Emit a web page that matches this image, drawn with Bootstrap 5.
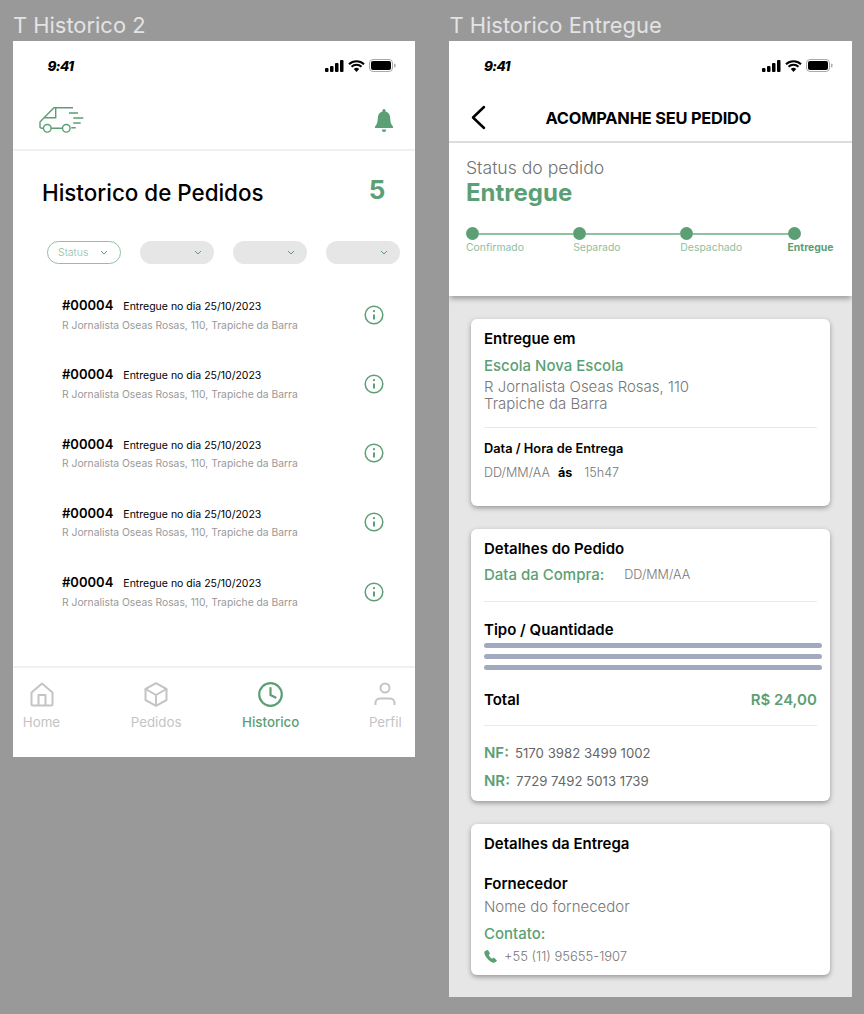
<!DOCTYPE html>
<html lang="pt-BR">
<head>
  <meta charset="UTF-8" />
  <meta name="viewport" content="width=device-width, initial-scale=1.0"/>
  <title>Historico</title>
  <link href="https://cdn.jsdelivr.net/npm/bootstrap@5.3.0/dist/css/bootstrap.min.css" rel="stylesheet"/>
  <style>
    :root { --verde: #5c9f74; --verde-claro: #8fc0a0; --cinza: #7d7d7d; }
    body { background: #999; font-family: Inter, "Liberation Sans", sans-serif; color: #000; height: 1014px; overflow: hidden; }
    .canvas { padding-left: 12.5px; gap: 33.7px; }
    .frame-col { width: 402.8px; }
    .frame-label { height: 41px; padding: 13px 0 0 .5px; font-size: 21.900px; line-height: 24px; color: #e3e3e3; white-space: nowrap; }
    .frame { background: #fff; }
    .status-bar { height: 52px; padding: 17px 19px 0 35px; }
    .clock { font-size: 13.500px; font-weight: 800; font-style: italic; line-height: 17px; letter-spacing: -.6px; }
    .status-icons { gap: 4px; margin-top: 1px; }

    /* gaps between the text lines of the cards */
    .sp-3 { margin-top: 3px; } .sp-4 { margin-top: 4px; } .sp-5 { margin-top: 5px; } .sp-8 { margin-top: 8px; } .sp-9 { margin-top: 9px; }
    .sp-10 { margin-top: 10px; } .sp-13 { margin-top: 13px; } .sp-15 { margin-top: 15px; } .sp-16 { margin-top: 16px; } .sp-17 { margin-top: 17px; }
    .sp-18 { margin-top: 18px; } .sp-19 { margin-top: 19px; } .sp-21 { margin-top: 21px; } .sp-22 { margin-top: 22px; }

    /* left */
    .top-bar { height: 58px; padding: 0 22px 2px 26px; border-bottom: 2px solid #f0f0f0; }
    .title-row { padding: 25px 30px 0 29.500px; height: 90px; }
    .title-row h1 { font-size: 22.400px; font-weight: 500; line-height: 34px; margin: 0; }
    .count { font-size: 26px; font-weight: 700; color: var(--verde); line-height: 30px; margin-top: -1px; }
    .filters { padding-left: 34.500px; gap: 19px; }
    .pill { width: 74px; height: 23px; border-radius: 12px; background: #e6e6e6; padding-right: 12px; }
    .pill-on { background: #fff; border: 1px solid var(--verde-claro); color: var(--verde-claro); font-size: 10.500px; padding: 0 12px 0 10px; }
    .orders { padding: 32px 31px 0 49.500px; height: 402px; }
    .order { height: 69.3px; }
    .order-top { line-height: 17px; }
    .order-id { font-size: 13px; font-weight: 600; }
    .order-date { font-size: 10.500px; font-weight: 400; margin-left: 10px; }
    .order-addr { font-size: 10.300px; color: #999; line-height: 14px; margin-top: 2.500px; }
    .order-info { margin-top: 8.500px; }
    .tabbar { height: 91px; padding: 14px 1px 0 0; border-top: 2px solid #f0f0f0; }
    .tab { width: 58px; color: #c4c4c4; font-size: 13.300px; line-height: 16px; font-weight: 400; }
    .tab svg { margin-bottom: 7px; }
    .tab-on { color: var(--verde); font-weight: 500; }

    /* right */
    .back-bar { height: 50px; padding-left: 22.500px; border-bottom: 2px solid #ddd; }
    .back-title { font-size: 16.400px; font-weight: 700; letter-spacing: -.2px; margin-left: 59px; padding-top: 2px; }
    .status-box { height: 153px; padding: 13px 17px 0; box-shadow: 0 4px 5px -1px rgba(0,0,0,.3); }
    .status-small { font-size: 17.600px; line-height: 24px; color: #727272; font-weight: 300; }
    .status-big { font-size: 24px; line-height: 26px; font-weight: 700; color: var(--verde); }
    .stepper { margin-top: 21px; width: 369px; }
    .step { width: 107.2px; }
    .step-last { width: 47px; }
    .step-dot { width: 13px; height: 13px; border-radius: 50%; background: var(--verde); }
    .step-line { flex: 1; height: 2px; background: var(--verde-claro); }
    .step-name { font-size: 10.400px; line-height: 13px; color: var(--verde-claro); display: block; padding-top: 1px; }
    .step-end { font-weight: 700; color: var(--verde); white-space: nowrap; }
    .panel-area { background: #e6e6e6; padding: 23px 22px 22px; height: 701px; gap: 23px; }
    .info-card { border: 0; border-radius: 6px; padding: 11px 13px 0; box-shadow: 0 2px 5px rgba(0,0,0,.35); }
    .card-head { font-size: 15px; font-weight: 600; line-height: 18px; }
    .green-head { font-size: 15px; font-weight: 500; line-height: 18px; color: var(--verde); }
    .gray-big { font-size: 15px; font-weight: 300; line-height: 17px; color: #777; }
    .gray-small { font-size: 12.600px; font-weight: 300; line-height: 16px; color: #777; }
    .phone-line { font-size: 13px; gap: 7px; }
    .sub-head { font-size: 12.800px; font-weight: 600; line-height: 16px; }
    .rule { height: 1px; background: #e9e9e9; }
    .bar-stack { gap: 6px; margin-right: -5px; }
    .bar-line { height: 5px; border-radius: 3px; background: #a1aabf; }
    .nf-row { gap: 6px; }
    .nf-code { font-size: 13.200px; line-height: 18px; color: #666; font-weight: 400; }
    .end-25 { margin-bottom: 25px; }
    .end-11 { margin-bottom: 11px; }
  </style>
</head>
<body>
  <div class="canvas d-flex">

    <!-- Historico -->
    <div class="frame-col">
      <div class="frame-label">T Historico 2</div>
      <div class="frame">
        <div class="status-bar d-flex justify-content-between align-items-start">
          <span class="clock">9:41</span>
          <span class="status-icons d-flex align-items-center">
            <svg width="19" height="12" viewBox="0 0 19 12"><rect x="0" y="8" width="3.500" height="4" rx="1"/><rect x="5" y="6" width="3.500" height="6" rx="1"/><rect x="10" y="3" width="3.500" height="9" rx="1"/><rect x="15" y="0" width="3.500" height="12" rx="1"/></svg>
            <svg width="17" height="12" viewBox="0 0 17 12"><path d="M1 4.200a11 11 0 0 1 15 0M3.500 6.800a7.400 7.400 0 0 1 10 0" fill="none" stroke="#000" stroke-width="2"/><path d="M5.800 9a4 4 0 0 1 5.400 0L8.500 12z"/></svg>
            <svg width="27" height="13" viewBox="0 0 27 13"><rect x=".5" y=".5" width="23" height="12" rx="3.500" fill="none" stroke="#aaa"/><rect x="2" y="2" width="20" height="9" rx="2"/><rect x="25" y="4.500" width="1.500" height="4" rx=".7" fill="#aaa"/></svg>
          </span>
        </div>
        <div class="top-bar d-flex justify-content-between align-items-center">
          <svg width="45" height="26" viewBox="0 0 45 26" fill="none" stroke="#5c9f74" stroke-width="1.400">
            <path d="M34 .7H15L5 10.700 1 15v5q0 1.300 3.500 1.300M12 21.300h11.500M16.700 .7v10H5"/>
            <circle cx="8.300" cy="21.300" r="3.800"/><circle cx="27.300" cy="21.300" r="3.800"/>
            <path d="M30 6h9M34.300 11h10M34.300 16h7.400M32.300 20.700h4.400"/>
          </svg>
          <svg width="18" height="23" viewBox="0 0 20 23" preserveAspectRatio="none" fill="#5c9f74"><path d="M10 0a1.800 1.800 0 0 1 1.800 1.800v.7c3.500.8 5.200 3.700 5.200 7.500 0 3.500 1 5.500 3 7.500v1.500H0V17.500c2-2 3-4 3-7.500 0-3.800 1.700-6.700 5.200-7.500v-.7A1.800 1.800 0 0 1 10 0z"/><path d="M7.500 20.500h5a2.500 2.500 0 0 1-5 0z"/></svg>
        </div>
        <div class="title-row d-flex justify-content-between align-items-start">
          <h1>Historico de Pedidos</h1>
          <span class="count">5</span>
        </div>
        <div class="filters d-flex">
          <div class="pill pill-on d-flex justify-content-between align-items-center"><span class="fw-light">Status</span><svg width="8" height="5" viewBox="0 0 8 5" fill="none" stroke="#5c9f74"><path d="M1 1l3 3 3-3"/></svg></div>
          <div class="pill d-flex justify-content-end align-items-center"><svg width="8" height="5" viewBox="0 0 8 5" fill="none" stroke="#5c9f74"><path d="M1 1l3 3 3-3"/></svg></div>
          <div class="pill d-flex justify-content-end align-items-center"><svg width="8" height="5" viewBox="0 0 8 5" fill="none" stroke="#5c9f74"><path d="M1 1l3 3 3-3"/></svg></div>
          <div class="pill d-flex justify-content-end align-items-center"><svg width="8" height="5" viewBox="0 0 8 5" fill="none" stroke="#5c9f74"><path d="M1 1l3 3 3-3"/></svg></div>
        </div>
        <div class="orders" id="orders"></div>
        <div class="tabbar d-flex justify-content-between">
          <div class="tab d-flex flex-column align-items-center">
            <svg width="24" height="25" viewBox="0 0 24 25" fill="none" stroke="#c4c4c4" stroke-width="2" stroke-linejoin="round"><path d="M1.500 10.500L12 1.500l10.500 9V22a1.500 1.500 0 0 1-1.500 1.500H3A1.500 1.500 0 0 1 1.500 22z"/><path d="M8.500 23.500V13h7v10.500"/></svg>
            <span>Home</span>
          </div>
          <div class="tab d-flex flex-column align-items-center">
            <svg width="24" height="25" viewBox="0 0 24 25" fill="none" stroke="#c4c4c4" stroke-width="2" stroke-linejoin="round"><path d="M12 1.200L22.500 7v11L12 23.800 1.500 18V7z"/><path d="M1.500 7L12 13l10.500-6M12 13v10.800"/></svg>
            <span>Pedidos</span>
          </div>
          <div class="tab tab-on d-flex flex-column align-items-center">
            <svg width="25" height="25" viewBox="0 0 25 25" fill="none" stroke="#5c9f74" stroke-width="2.200" stroke-linecap="round"><circle cx="12.500" cy="12.500" r="11.300"/><path d="M12.500 6v7l5 2.500"/></svg>
            <span>Historico</span>
          </div>
          <div class="tab d-flex flex-column align-items-center">
            <svg width="22" height="25" viewBox="0 0 22 25" fill="none" stroke="#c4c4c4" stroke-width="2"><circle cx="11" cy="6" r="4.500"/><path d="M1.500 23v-2.500c0-2.500 2.500-4 5-4h9c2.500 0 5 1.500 5 4V23"/></svg>
            <span>Perfil</span>
          </div>
        </div>
      </div>
    </div>

    <!-- Historico Entregue -->
    <div class="frame-col">
      <div class="frame-label">T Historico Entregue</div>
      <div class="frame overflow-hidden">
        <div class="status-bar d-flex justify-content-between align-items-start">
          <span class="clock">9:41</span>
          <span class="status-icons d-flex align-items-center">
            <svg width="19" height="12" viewBox="0 0 19 12"><rect x="0" y="8" width="3.500" height="4" rx="1"/><rect x="5" y="6" width="3.500" height="6" rx="1"/><rect x="10" y="3" width="3.500" height="9" rx="1"/><rect x="15" y="0" width="3.500" height="12" rx="1"/></svg>
            <svg width="17" height="12" viewBox="0 0 17 12"><path d="M1 4.200a11 11 0 0 1 15 0M3.500 6.800a7.400 7.400 0 0 1 10 0" fill="none" stroke="#000" stroke-width="2"/><path d="M5.800 9a4 4 0 0 1 5.400 0L8.500 12z"/></svg>
            <svg width="27" height="13" viewBox="0 0 27 13"><rect x=".5" y=".5" width="23" height="12" rx="3.500" fill="none" stroke="#aaa"/><rect x="2" y="2" width="20" height="9" rx="2"/><rect x="25" y="4.500" width="1.500" height="4" rx=".7" fill="#aaa"/></svg>
          </span>
        </div>
        <div class="back-bar d-flex align-items-center">
          <svg width="15" height="25" viewBox="0 0 15 25" fill="none" stroke="#000" stroke-width="2.500" stroke-linecap="round" stroke-linejoin="round"><path d="M13 2L2 12.500 13 23"/></svg>
          <span class="back-title">ACOMPANHE SEU PEDIDO</span>
        </div>
        <div class="status-box position-relative">
          <div class="status-small">Status do pedido</div>
          <div class="status-big">Entregue</div>
          <div class="stepper d-flex align-items-center">
            <div class="step d-flex align-items-center"><span class="step-dot"></span><span class="step-line"></span></div>
            <div class="step d-flex align-items-center"><span class="step-dot"></span><span class="step-line"></span></div>
            <div class="step d-flex align-items-center"><span class="step-dot"></span><span class="step-line"></span></div>
            <div class="step-last d-flex align-items-center"><span class="step-dot"></span></div>
          </div>
          <div class="d-flex">
            <span class="step"><span class="step-name">Confirmado</span></span>
            <span class="step"><span class="step-name">Separado</span></span>
            <span class="step"><span class="step-name">Despachado</span></span>
            <span class="step-last"><span class="step-name step-end">Entregue</span></span>
          </div>
        </div>
        <div class="panel-area d-flex flex-column">
          <div class="card info-card">
            <div class="card-head">Entregue em</div>
            <div class="green-head sp-9">Escola Nova Escola</div>
            <div class="gray-big sp-3">R Jornalista Oseas Rosas, 110<br>Trapiche da Barra</div>
            <div class="rule sp-15"></div>
            <div class="sub-head sp-13">Data / Hora de Entrega</div>
            <div class="gray-small d-flex gap-2 sp-8 end-25"><span>DD/MM/AA</span><b class="fw-bold text-black">ás</b><span class="ms-1">15h47</span></div>
          </div>
          <div class="card info-card">
            <div class="card-head">Detalhes do Pedido</div>
            <div class="d-flex align-items-center sp-8"><span class="green-head">Data da Compra:</span><span class="gray-small ms-3 ps-1">DD/MM/AA</span></div>
            <div class="rule sp-17"></div>
            <div class="card-head sp-19">Tipo / Quantidade</div>
            <div class="bar-stack d-flex flex-column sp-4"><div class="bar-line"></div><div class="bar-line"></div><div class="bar-line"></div></div>
            <div class="d-flex justify-content-between sp-21"><span class="card-head">Total</span><span class="green-head fw-semibold">R$ 24,00</span></div>
            <div class="rule sp-16"></div>
            <div class="nf-row d-flex align-items-center sp-18"><span class="green-head fw-semibold">NF:</span><span class="nf-code">5170 3982 3499 1002</span></div>
            <div class="nf-row d-flex align-items-center sp-10 end-11"><span class="green-head fw-semibold">NR:</span><span class="nf-code">7729 7492 5013 1739</span></div>
          </div>
          <div class="card info-card">
            <div class="card-head">Detalhes da Entrega</div>
            <div class="card-head sp-22">Fornecedor</div>
            <div class="gray-big sp-5">Nome do fornecedor</div>
            <div class="green-head sp-10">Contato:</div>
            <div class="gray-small phone-line d-flex align-items-center sp-5 end-11">
              <svg width="13" height="13" viewBox="0 0 13 13" fill="#5c9f74"><path d="M2.800.2L.8 1.200C-.3 2 .2 4.500 2.800 8c2.500 3.300 5.500 5 7.500 4.800l2.200-1.500c.4-.4.4-1 0-1.400L10.300 8c-.4-.3-1-.3-1.300 0l-1 .8C6.800 8 5.300 6.500 4.700 5l1-1c.3-.4.3-1 0-1.300L4.200.4C3.800 0 3.300 0 2.800.2z"/></svg>
              <span>+55 (11) 95655-1907</span>
            </div>
          </div>
        </div>
      </div>
    </div>
  </div>

  <script src="https://cdn.jsdelivr.net/npm/bootstrap@5.3.0/dist/js/bootstrap.bundle.min.js"></script>
  <script>
    // cinco pedidos iguais
    let html = '';
    for (let i = 0; i < 5; i++) {
      html += `
        <div class="order d-flex justify-content-between">
          <div>
            <div class="order-top"><span class="order-id">#00004</span><span class="order-date">Entregue no dia 25/10/2023</span></div>
            <div class="order-addr">R Jornalista Oseas Rosas, 110, Trapiche da Barra</div>
          </div>
          <svg class="order-info" width="20" height="20" viewBox="0 0 20 20" fill="none" stroke="#5c9f74" stroke-width="1.500"><circle cx="10" cy="10" r="8.800"/><path d="M10 9.500v5" stroke-width="2"/><circle cx="10" cy="6.200" r="1.100" fill="#5c9f74" stroke="none"/></svg>
        </div>`;
    }
    document.getElementById('orders').innerHTML = html;
  </script>
</body>
</html>
